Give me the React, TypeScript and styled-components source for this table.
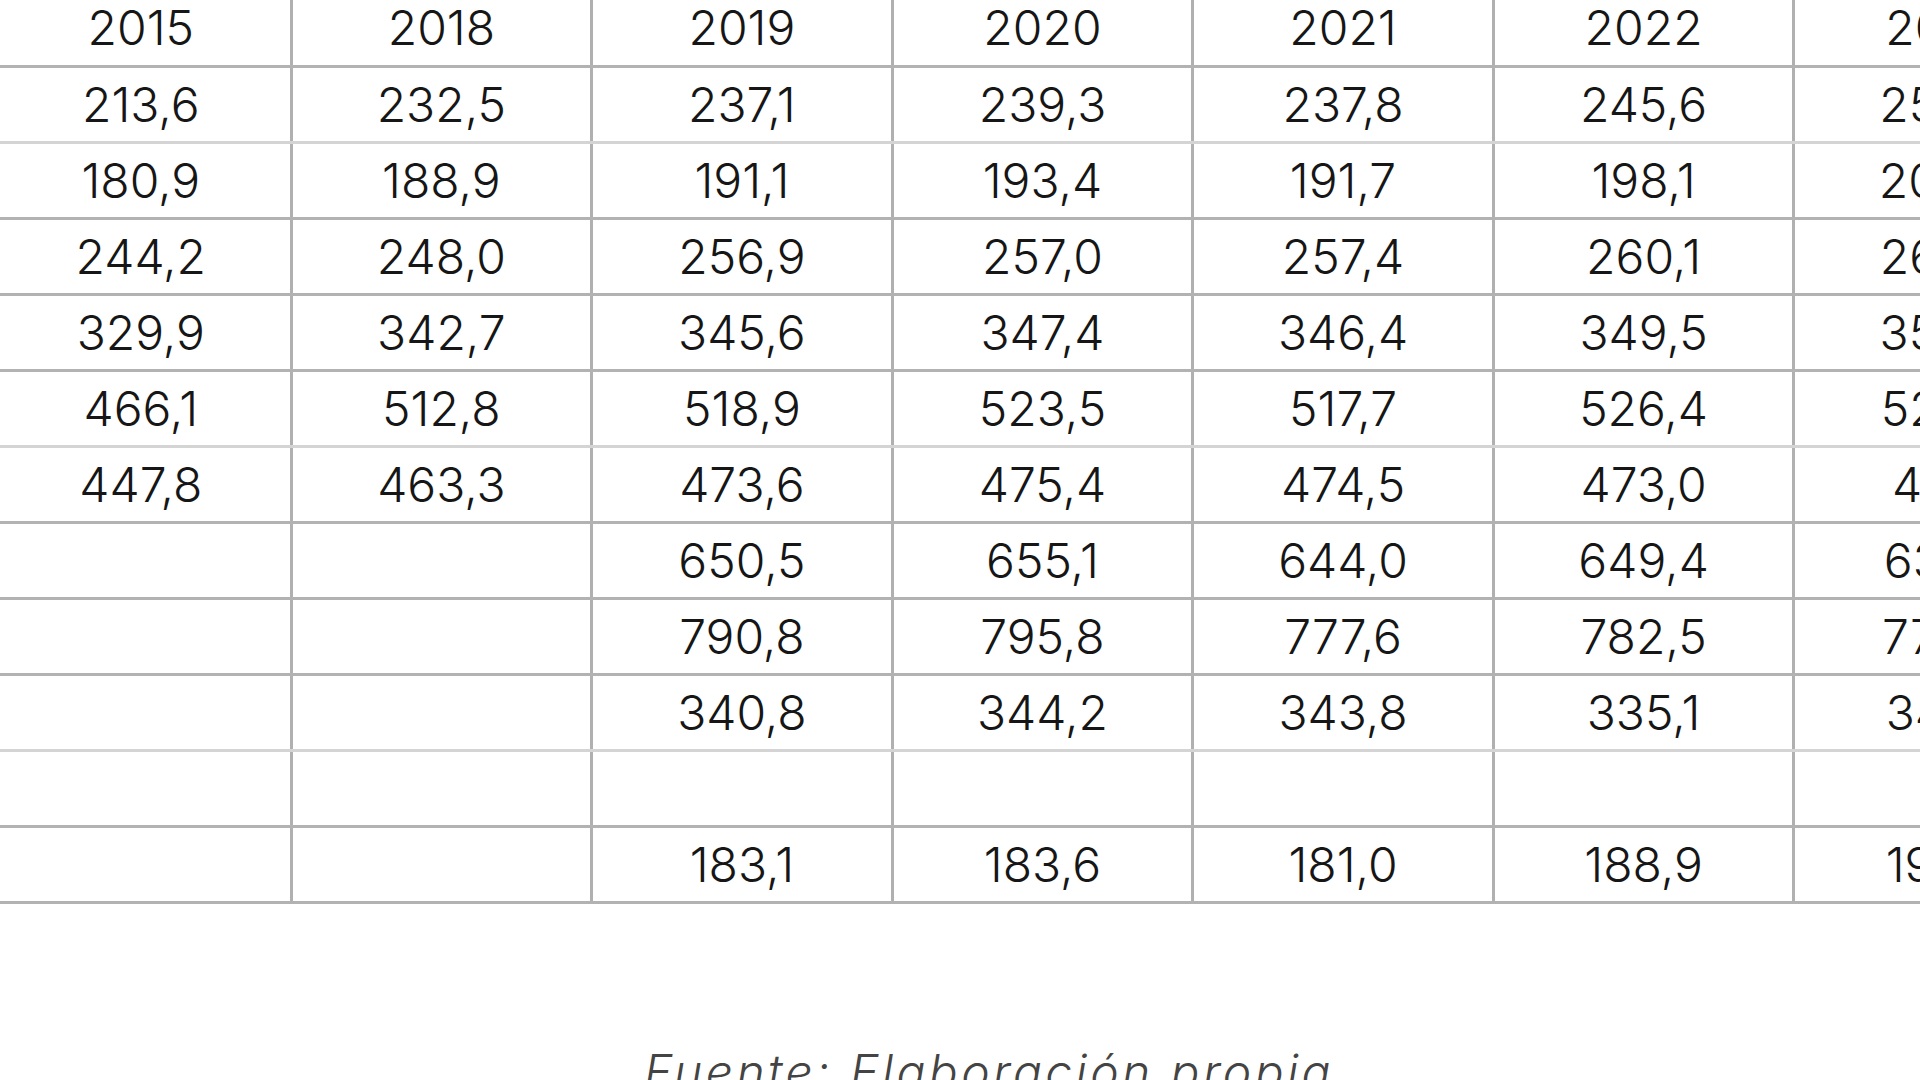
import React from 'react';
import styled, { createGlobalStyle } from 'styled-components';

const GlobalStyle = createGlobalStyle`
  html, body {
    margin: 0;
    padding: 0;
    background: #ffffff;
  }
  body {
    font-family: Inter, 'Liberation Sans', sans-serif;
    color: #1c1c1c;
  }
`;

const Page = styled.div`
  width: 1920px;
  height: 1080px;
  overflow: hidden;
  background: #ffffff;
`;

const Table = styled.table`
  margin: -10px 0 0 -11px;
  border-collapse: collapse;
  table-layout: fixed;
  width: 2107px;
`;

const Cell = styled.td<{ $light?: boolean; $head?: boolean }>`
  height: ${props => (props.$head ? '75px' : '73px')};
  padding: 0;
  border-left: 3px solid #b0b0b0;
  border-right: 3px solid #b0b0b0;
  border-bottom: 3px solid ${props => (props.$light ? '#d4d4d4' : '#b2b2b2')};
  text-align: center;
  vertical-align: middle;
  font-family: Inter, 'Liberation Sans', sans-serif;
  font-weight: 300;
  font-size: 48px;
  line-height: 1;
  color: #161616;
  white-space: nowrap;
`;

const Caption = styled.p`
  margin: 139px 0 0;
  padding-left: 58px;
  text-align: center;
  font-family: Inter, 'Liberation Sans', sans-serif;
  font-style: italic;
  font-weight: 300;
  font-size: 48px;
  letter-spacing: 3.4px;
  line-height: 1.2;
  color: #444444;
`;

const years = ['2015', '2018', '2019', '2020', '2021', '2022', '2023'];

const rows: { values: string[]; light?: boolean }[] = [
  { values: ['213,6', '232,5', '237,1', '239,3', '237,8', '245,6', '253,4'], light: true },
  { values: ['180,9', '188,9', '191,1', '193,4', '191,7', '198,1', '202,9'] },
  { values: ['244,2', '248,0', '256,9', '257,0', '257,4', '260,1', '264,8'] },
  { values: ['329,9', '342,7', '345,6', '347,4', '346,4', '349,5', '354,2'] },
  { values: ['466,1', '512,8', '518,9', '523,5', '517,7', '526,4', '529,3'], light: true },
  { values: ['447,8', '463,3', '473,6', '475,4', '474,5', '473,0', '471,1'] },
  { values: ['', '', '650,5', '655,1', '644,0', '649,4', '637,8'] },
  { values: ['', '', '790,8', '795,8', '777,6', '782,5', '776,2'] },
  { values: ['', '', '340,8', '344,2', '343,8', '335,1', '341,7'], light: true },
  { values: ['', '', '', '', '', '', ''] },
  { values: ['', '', '183,1', '183,6', '181,0', '188,9', '193,5'] },
];

const App = () => {
  return (
    <Page>
      <GlobalStyle />
      <Table>
        <tbody>
          <tr>
            {years.map(y => (
              <Cell key={y} $head>
                {y}
              </Cell>
            ))}
          </tr>
          {rows.map((row, i) => (
            <tr key={i}>
              {row.values.map((v, j) => (
                <Cell key={j} $light={row.light}>
                  {v}
                </Cell>
              ))}
            </tr>
          ))}
        </tbody>
      </Table>
      <Caption>Fuente: Elaboración propia</Caption>
    </Page>
  );
};

export default App;
